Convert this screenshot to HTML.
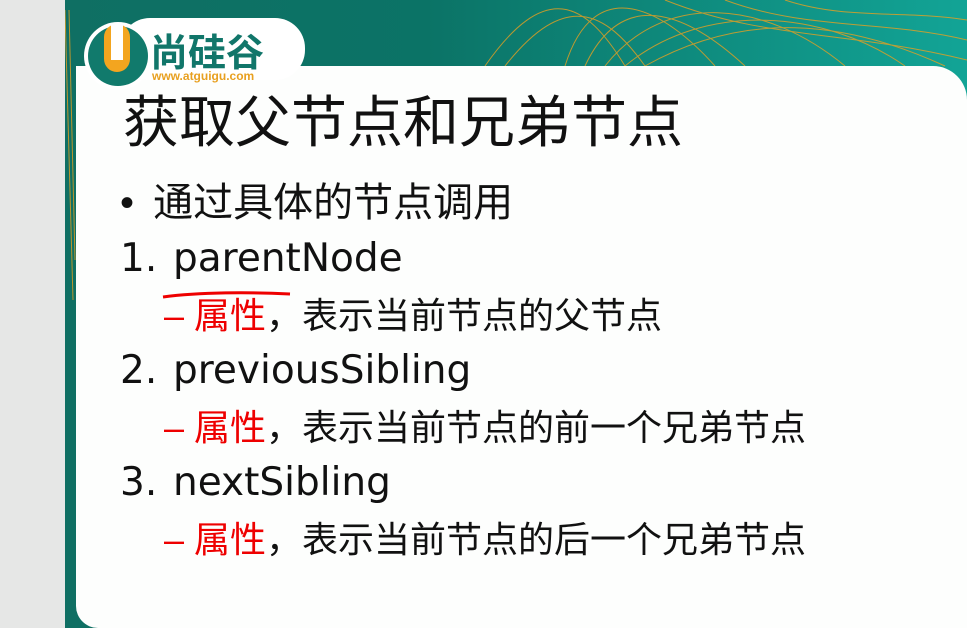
<!DOCTYPE html><html><head><meta charset="utf-8"><style>
html,body{margin:0;width:967px;height:628px;overflow:hidden}
body{background:#e6e7e6;position:relative;font-family:"Liberation Sans","Noto Sans CJK SC",sans-serif}
.bg{position:absolute;left:65px;top:0;width:902px;height:628px;background:linear-gradient(90deg,#0f6f63 0%,#0b7366 40%,#12a496 100%)}
.card{position:absolute;left:76px;top:66px;width:891px;height:562px;background:#fdfefd;border-radius:0 34px 0 22px}
.t{position:absolute;white-space:nowrap;color:#111;line-height:1}
.l{font-family:"DejaVu Sans","Noto Sans CJK SC",sans-serif}
.r{color:#e00}
</style></head><body>
<div class="bg"><svg width="902" height="628" style="position:absolute;left:0;top:0">
<g fill="none" stroke="#e8a020" stroke-width="1" opacity=".8">
<path d="M420 66 C480 -20 520 0 560 66"/><path d="M440 66 C500 -10 540 10 580 66"/>
<path d="M500 66 C530 -30 600 10 650 66"/><path d="M520 66 C560 -20 630 20 680 66"/>
<path d="M540 66 C600 -10 700 0 780 66"/><path d="M560 66 C640 0 760 10 840 66"/>
<path d="M580 66 C680 10 780 20 880 66"/><path d="M600 0 C700 40 780 30 902 60"/>
<path d="M660 0 C740 30 820 20 902 40"/><path d="M720 0 C780 20 840 10 902 20"/>
<path d="M0 10 L8 300"/><path d="M4 10 L10 260"/>
</g></svg></div>
<div class="card"></div>
<svg style="position:absolute;left:80px;top:12px" width="230" height="80">
<rect x="40" y="6" width="185" height="62" rx="30" fill="#fff"/>
<circle cx="38" cy="44" r="34" fill="#fff"/>
<circle cx="38" cy="44" r="30" fill="#117a6c"/>
<rect x="24" y="12" width="26" height="48" rx="13" fill="#f3a51f"/>
<rect x="31" y="12" width="12" height="36" fill="#fff"/>
<text x="70" y="54" font-size="38" font-weight="bold" fill="#11766a" font-family="Noto Sans CJK SC,sans-serif">尚硅谷</text>
<text x="72" y="68" font-size="12" font-weight="bold" fill="#e8a020" font-family="Liberation Sans,sans-serif">www.atguigu.com</text>
</svg>
<div class="t" style="left:123px;top:95px;font-size:56px">获取父节点和兄弟节点</div>
<div class="t" style="left:120px;top:183px;font-size:40px">•&nbsp;<span style="margin-left:8px">通过具体的节点调用</span></div>
<div class="t l" style="left:120px;top:239px;font-size:39px">1. <span style="position:absolute;left:53px">parentNode</span></div>
<div class="t" style="left:164px;top:298px;font-size:36px"><span class="r">– 属性</span>，表示当前节点的父节点</div>
<div class="t l" style="left:120px;top:351px;font-size:39px">2. <span style="position:absolute;left:53px">previousSibling</span></div>
<div class="t" style="left:164px;top:410px;font-size:36px"><span class="r">– 属性</span>，表示当前节点的前一个兄弟节点</div>
<div class="t l" style="left:120px;top:463px;font-size:39px">3. <span style="position:absolute;left:53px">nextSibling</span></div>
<div class="t" style="left:164px;top:522px;font-size:36px"><span class="r">– 属性</span>，表示当前节点的后一个兄弟节点</div>
<svg style="position:absolute;left:160px;top:288px" width="135" height="14"><path d="M3 9 C40 4 90 4 130 6" stroke="#e00" stroke-width="3" fill="none"/></svg>
</body></html>
